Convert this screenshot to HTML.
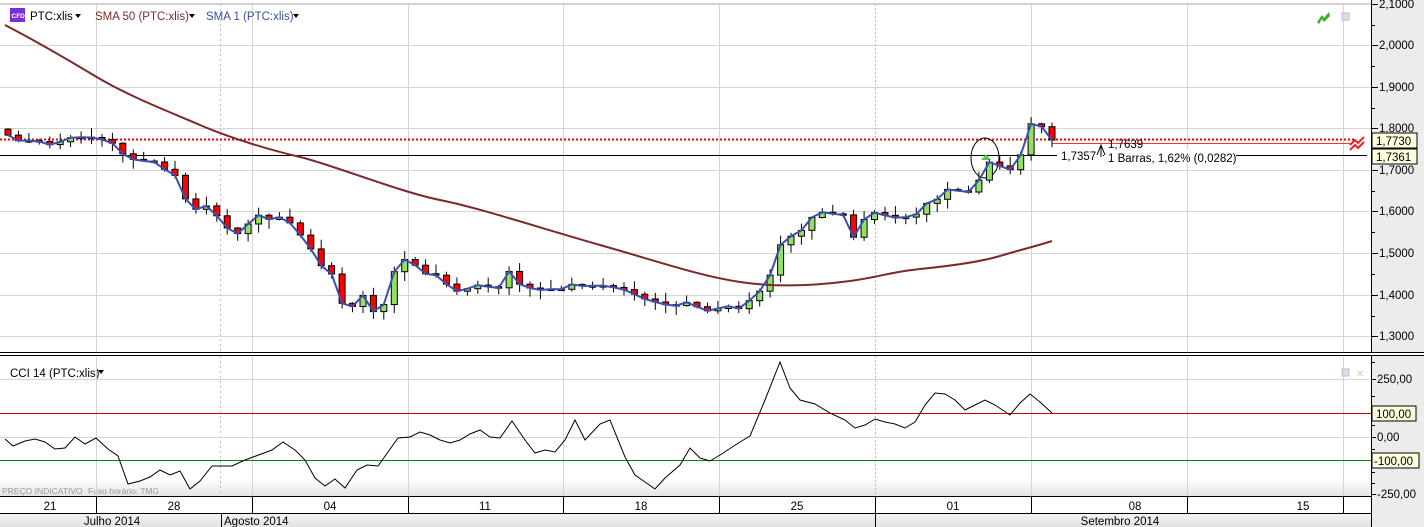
<!DOCTYPE html>
<html><head><meta charset="utf-8">
<style>
html,body{margin:0;padding:0;background:#fff;}
svg{display:block;font-family:"Liberation Sans",sans-serif;}
</style></head>
<body>
<svg id="s" width="1424" height="527" viewBox="0 0 1424 527" xmlns="http://www.w3.org/2000/svg">
<defs>
<linearGradient id="gb" x1="0" y1="0" x2="0" y2="1"><stop offset="0" stop-color="#ffffff"/><stop offset="1" stop-color="#e4e4e4"/></linearGradient>
<linearGradient id="gm" x1="0" y1="0" x2="0" y2="1"><stop offset="0" stop-color="#f4f4f4"/><stop offset="1" stop-color="#e2e2e2"/></linearGradient>
</defs>
<rect x="0" y="0" width="1424" height="527" fill="#fff"/>
<rect x="1371" y="0" width="53" height="527" fill="#ececec"/>
<line x1="1371.5" y1="0" x2="1371.5" y2="527" stroke="#000"/>
<g id="grid"></g>
<g id="ann"></g>
<g id="cand"></g>
<g id="lines"></g>
<line x1="0" y1="3.5" x2="1371" y2="3.5" stroke="#cfcfcf"/>
<rect x="10" y="8" width="15" height="14" fill="#7a2fd0"/>
<text x="11.5" y="18" font-size="6.5" fill="#fff" font-weight="bold">CFD</text>
<text x="30" y="20" font-size="11.5" fill="#000">PTC:xlis</text>
<path d="M75 14h6l-3 4z" fill="#000"/>
<text x="95" y="20" font-size="11.5" fill="#7b2a2a">SMA 50 (PTC:xlis)</text>
<path d="M189 14h6l-3 4z" fill="#000"/>
<text x="206" y="20" font-size="11.5" fill="#3a4fa8">SMA 1 (PTC:xlis)</text>
<path d="M293 14h6l-3 4z" fill="#000"/>
<path d="M1317 22l5-7 2 3 5-6 1 4-6 6-2-3-3 5z" fill="#3ab41e"/>
<rect x="1342" y="13" width="7" height="7" fill="#dde" stroke="#b8bcc8"/>
<rect x="0" y="352" width="1424" height="4" fill="#fff"/>
<line x1="0" y1="352.5" x2="1424" y2="352.5" stroke="#000"/>
<line x1="0" y1="355.5" x2="1424" y2="355.5" stroke="#000"/>
<text x="10" y="377" font-size="11.5" fill="#000">CCI 14 (PTC:xlis)</text>
<path d="M98 370h6l-3 4z" fill="#000"/>
<rect x="1342" y="369" width="7" height="7" fill="#dde" stroke="#b8bcc8"/>
<text x="1356" y="377" font-size="10" fill="#ccc">✕</text>
<rect x="0" y="479" width="1371" height="17" fill="url(#gb)"/>
<text x="2" y="494" font-size="8.5" fill="#999">PREÇO INDICATIVO</text>
<text x="88" y="494" font-size="8.5" fill="#999">Fuso horário: TMG</text>
<g id="cci"></g>
<rect x="0" y="497" width="1371" height="16" fill="#fff"/>
<rect x="0" y="513" width="1371" height="14" fill="url(#gm)"/>
<line x1="0" y1="496.5" x2="1371" y2="496.5" stroke="#000"/>
<line x1="0" y1="513.5" x2="1371" y2="513.5" stroke="#000"/>
<g id="dates" font-size="11.5" fill="#000" text-anchor="middle"></g>
<g font-size="11.5" fill="#000">
<text x="112" y="525" text-anchor="middle">Julho 2014</text>
<line x1="221.5" y1="513" x2="221.5" y2="527" stroke="#000"/>
<text x="224" y="525">Agosto 2014</text>
<line x1="875.5" y1="513" x2="875.5" y2="527" stroke="#000"/>
<text x="1120" y="525" text-anchor="middle">Setembro 2014</text>
</g>
<g id="axis" font-size="11.5" fill="#000"></g>
</svg>
<script>
(function(){
var NS="http://www.w3.org/2000/svg";
function el(p,t,a,txt){var e=document.createElementNS(NS,t);for(var k in a)e.setAttribute(k,a[k]);if(txt!=null)e.textContent=txt;document.getElementById(p).appendChild(e);return e;}
var py=[4,45,87,128,170,211,253,295,336];
py.forEach(function(y){el("grid","line",{x1:0,y1:y+.5,x2:1371,y2:y+.5,stroke:"#d4d4d4"});});
var vx=[96,252,408,563,719,875,1031,1187,1343];
vx.forEach(function(x){
 if(x!=875) el("grid","line",{x1:x+.5,y1:4,x2:x+.5,y2:352,stroke:"#d4d4d4"});
 else el("grid","line",{x1:x+.5,y1:4,x2:x+.5,y2:352,stroke:"#bbb","stroke-dasharray":"2,2"});
 if(x!=875) el("cci","line",{x1:x+.5,y1:356,x2:x+.5,y2:496,stroke:"#d4d4d4"});
 else el("cci","line",{x1:x+.5,y1:356,x2:x+.5,y2:496,stroke:"#bbb","stroke-dasharray":"2,2"});
 el("dates","line",{x1:x+.5,y1:497,x2:x+.5,y2:513,stroke:"#000"});
});
el("grid","line",{x1:220.5,y1:4,x2:220.5,y2:352,stroke:"#bbb","stroke-dasharray":"2,3"});
el("cci","line",{x1:220.5,y1:356,x2:220.5,y2:496,stroke:"#bbb","stroke-dasharray":"2,3"});
[[50,"21"],[174,"28"],[330,"04"],[485,"11"],[641,"18"],[797,"25"],[953,"01"],[1135,"08"],[1303,"15"]].forEach(function(d){el("dates","text",{x:d[0],y:510},d[1]);});
[379,437].forEach(function(y){el("cci","line",{x1:0,y1:y+.5,x2:1371,y2:y+.5,stroke:"#d4d4d4"});});
el("cci","line",{x1:0,y1:413.5,x2:1371,y2:413.5,stroke:"#c00"});
el("cci","line",{x1:0,y1:460.5,x2:1371,y2:460.5,stroke:"#080"});
el("ann","line",{x1:0,y1:139.5,x2:1356,y2:139.5,stroke:"#e00","stroke-width":2,"stroke-dasharray":"2,2"});
el("ann","line",{x1:0,y1:155.5,x2:1367,y2:155.5,stroke:"#000"});
el("ann","line",{x1:1052,y1:143.5,x2:1352,y2:143.5,stroke:"#f33"});
el("ann","line",{x1:1052,y1:140,x2:1052,y2:146,stroke:"#f33"});
el("ann","rect",{x:1057,y:148,width:46,height:14,fill:"#fff"});
el("ann","rect",{x:1104,y:150,width:132,height:14,fill:"#fff"});
el("ann","path",{d:"M1097 155l4-10 4 10M1101 145v12",stroke:"#000",fill:"none"});
el("ann","text",{x:1061,y:160,"font-size":"11.5"},"1,7357");
el("ann","text",{x:1108,y:148,"font-size":"11.5"},"1,7639");
el("ann","text",{x:1108,y:162,"font-size":"11.5"},"1 Barras, 1,62% (0,0282)");
el("ann","path",{d:"M1350 150l5-5 3 3 6-6M1350 145l5-5 3 3 6-6",stroke:"#e22",fill:"none","stroke-width":2});
el("ann","ellipse",{cx:985,cy:158,rx:14,ry:20,fill:"none",stroke:"#000"});
el("ann","path",{d:"M981 160l5-6 5 6z",fill:"#5c5"});
var K=[[6,134],[23,143],[33,139],[43,143],[55,146],[65,138],[85,137],[97,138],[107,141],[117,145],[127,160],[137,159],[147,162],[158,162],[168,173],[180,177],[190,217],[200,204],[210,207],[220,220],[230,231],[242,235],[252,217],[263,214],[273,223],[283,214],[293,227],[303,238],[313,252],[325,272],[335,275],[347,323],[357,293],[367,297],[378,322],[387,295],[397,263],[408,258],[418,268],[430,277],[440,274],[449,288],[459,292],[469,288],[478,285],[490,287],[500,288],[511,268],[520,285],[530,288],[540,290],[550,289],[560,290],[570,284],[580,286],[590,286],[600,285],[610,287],[620,288],[632,293],[642,298],[652,301],[662,304],[675,306],[686,302],[700,308],[708,311],[720,308],[730,306],[740,309],[750,300],[761,290],[772,272],[783,237],[793,236],[802,230],[813,216],[823,212],[834,214],[844,215],[854,238],[866,216],[876,212],[887,216],[897,218],[907,217],[917,214],[928,202],[938,199],[948,189],[959,191],[969,192],[979,180],[989,162],[1000,166],[1010,170],[1022,153],[1032,121],[1042,127],[1052,140]];
function interp(x){for(var i=0;i<K.length-1;i++){if(x<=K[i+1][0]){var a=K[i],b=K[i+1];return a[1]+(b[1]-a[1])*(x-a[0])/(b[0]-a[0]);}}return K[K.length-1][1];}
var N=101,st=(1052-8)/(N-1),prev=interp(8)-6,pts=[];
for(var i=0;i<N;i++){
 var x=8+i*st,c=interp(x),o=prev;
 var r1=((i*37)%11)/11, r2=((i*53)%13)/13;
 var wt=Math.min(o,c)-1-r1*9, wb=Math.max(o,c)+1+r2*9;
 el("cand","line",{x1:x.toFixed(1),y1:wt.toFixed(1),x2:x.toFixed(1),y2:wb.toFixed(1),stroke:"#000"});
 var h=Math.max(Math.abs(c-o),1.5);
 el("cand","rect",{x:(x-3).toFixed(1),y:Math.min(o,c).toFixed(1),width:6,height:h.toFixed(1),fill:(c>o?"#f00":"#93e062"),stroke:"#000","stroke-width":1});
 pts.push(x.toFixed(1)+","+c.toFixed(1));prev=c;
}
el("lines","path",{d:"M5,25 C30,38 60,55 95,76 S170,112 200,125 S270,150 300,157 S400,192 440,200 S540,228 600,245 S700,276 740,282 S820,285 850,281 S890,272 920,269 S980,262 1000,256 S1040,245 1052,241",stroke:"#7b2a2a","stroke-width":2,fill:"none"});
el("lines","polyline",{points:pts.join(" "),stroke:"#3c50b0","stroke-width":2,fill:"none"});
var C="5,439 13,446 25,441 35,439 45,442 55,449 65,448 75,437 85,444 96,438 108,449 118,456 128,484 140,481 150,477 160,470 170,475 180,471 190,489 200,481 212,466 232,466 245,460 272,450 283,442 295,450 305,460 315,478 325,486 335,479 345,488 357,470 367,465 378,466 398,438 410,437 420,432 430,435 440,440 450,443 460,440 470,434 480,430 490,437 500,438 512,421 525,440 535,453 545,450 555,452 565,440 575,420 585,440 600,424 610,420 625,457 635,475 645,482 655,489 665,478 680,465 690,448 700,458 710,461 720,455 740,442 750,436 765,400 780,362 790,388 800,400 815,404 830,413 845,420 855,428 865,425 875,419 885,422 895,424 905,428 915,422 925,405 935,393 945,394 955,400 965,410 975,405 985,400 995,405 1010,415 1020,403 1030,394 1040,402 1052,413";
el("cci","polyline",{points:C,stroke:"#000","stroke-width":1,fill:"none"});
var labs=["2,1000","2,0000","1,9000","1,8000","1,7000","1,6000","1,5000","1,4000","1,3000"];
py.forEach(function(y,i){el("axis","line",{x1:1371,y1:y+.5,x2:1378,y2:y+.5,stroke:"#000"});el("axis","text",{x:1379,y:y+4},labs[i]);
 if(i<8) el("axis","line",{x1:1371,y1:y+21.5,x2:1375,y2:y+21.5,stroke:"#000"});});
el("axis","rect",{x:1372,y:133,width:45,height:15,fill:"#ffffe0",stroke:"#000"});
el("axis","text",{x:1376,y:145},"1,7730");
el("axis","rect",{x:1372,y:149,width:45,height:15,fill:"#ffffe0",stroke:"#000"});
el("axis","text",{x:1376,y:161},"1,7361");
[[379,"250,00"],[437,"0,00"],[494,"-250,00"]].forEach(function(a){el("axis","line",{x1:1371,y1:a[0]+.5,x2:1376,y2:a[0]+.5,stroke:"#000"});el("axis","text",{x:1377,y:a[0]+4},a[1]);});
[362,396,425,449,472,483].forEach(function(y){el("axis","line",{x1:1371,y1:y+.5,x2:1375,y2:y+.5,stroke:"#000"});});
el("axis","rect",{x:1372,y:406,width:44,height:15,fill:"#ffffe0",stroke:"#000"});
el("axis","text",{x:1376,y:418},"100,00");
el("axis","rect",{x:1372,y:453,width:47,height:15,fill:"#ffffe0",stroke:"#000"});
el("axis","text",{x:1374,y:465},"-100,00");
})();
</script>
</body></html>
